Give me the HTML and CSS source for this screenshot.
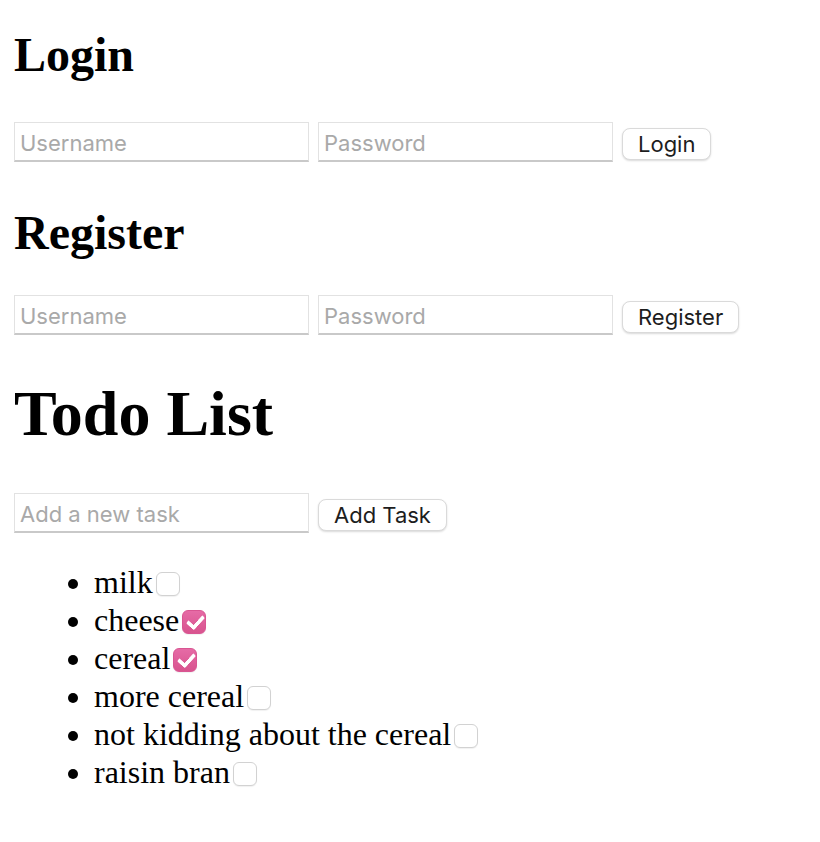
FILE: index.html
```html
<!DOCTYPE html>
<html lang="en">
<head>
    <meta charset="UTF-8" />
    <meta name="viewport" content="width=device-width, initial-scale=1.0" />
    <title>Todo List</title>
    <link rel="stylesheet" href="styles.css">
</head>
<body>
    <h2 class="login-title">Login</h2>
    <div class="form-row">
        <input type="text" placeholder="Username" />
        <input type="password" placeholder="Password" />
        <button>Login</button>
    </div>

    <h2 class="register-title">Register</h2>
    <div class="form-row">
        <input type="text" placeholder="Username" />
        <input type="password" placeholder="Password" />
        <button>Register</button>
    </div>

    <h1>Todo List</h1>
    <div class="form-row">
        <input type="text" placeholder="Add a new task" />
        <button>Add Task</button>
    </div>

    <ul class="todo-list">
        <li>milk<input type="checkbox" /></li>
        <li>cheese<input type="checkbox" checked /></li>
        <li>cereal<input type="checkbox" checked /></li>
        <li>more cereal<input type="checkbox" /></li>
        <li>not kidding about the cereal<input type="checkbox" /></li>
        <li>raisin bran<input type="checkbox" /></li>
    </ul>
</body>
</html>
```

FILE: styles.css
```css
body {
    font-family: "Liberation Serif", "Times New Roman", serif;
    font-size: 32px;
    color: #000;
    margin: 0 0 0 14px;
}

h1,
h2 {
    font-weight: bold;
    margin: 0;
}

h2 {
    font-size: 48px;
}

.login-title {
    margin: 27px 0 40px;
}

.register-title {
    margin: 43px 0 35px;
}

h1 {
    font-size: 64px;
    margin: 42px 0 42px;
}

.form-row {
    display: flex;
    align-items: center;
    gap: 9px;
}

input[type="text"],
input[type="password"] {
    width: 295px;
    height: 40px;
    box-sizing: border-box;
    padding: 2px 5px 0;
    border: 1px solid #e2e2e2;
    border-bottom: 2px solid #c9c9c9;
    border-radius: 0;
    font-family: Inter, "Noto Sans", sans-serif;
    font-size: 22px;
    color: #222;
    background: #fff;
    outline: none;
}

input::placeholder {
    color: #a9a9a9;
}

button {
    height: 32px;
    margin-top: 4px;
    padding: 0 15px;
    border: 1px solid #dadada;
    border-radius: 8px;
    background: #fff;
    box-shadow: 0 1px 2px rgba(0, 0, 0, 0.15);
    font-family: Inter, "Noto Sans", sans-serif;
    font-size: 22px;
    color: #1d1d1d;
}

.todo-list {
    margin: 30px 0 0;
    padding-left: 80px;
}

.todo-list li {
    line-height: 38px;
}

.todo-list input[type="checkbox"] {
    appearance: none;
    -webkit-appearance: none;
    width: 24px;
    height: 24px;
    margin: 0 0 0 3px;
    vertical-align: -3px;
    border: 1px solid #d2d2d2;
    border-radius: 6px;
    background: #fff;
    box-shadow: 0 1px 1px rgba(0, 0, 0, 0.06);
    position: relative;
}

.todo-list input[type="checkbox"]:checked {
    border-color: #d95592;
    background: linear-gradient(#e66ba6, #d8538e);
}

.todo-list input[type="checkbox"]:checked::after {
    content: "";
    position: absolute;
    left: 7px;
    top: 1px;
    width: 7px;
    height: 13px;
    border: solid #fff;
    border-width: 0 4px 4px 0;
    border-radius: 2px;
    transform: rotate(42deg);
}
```
